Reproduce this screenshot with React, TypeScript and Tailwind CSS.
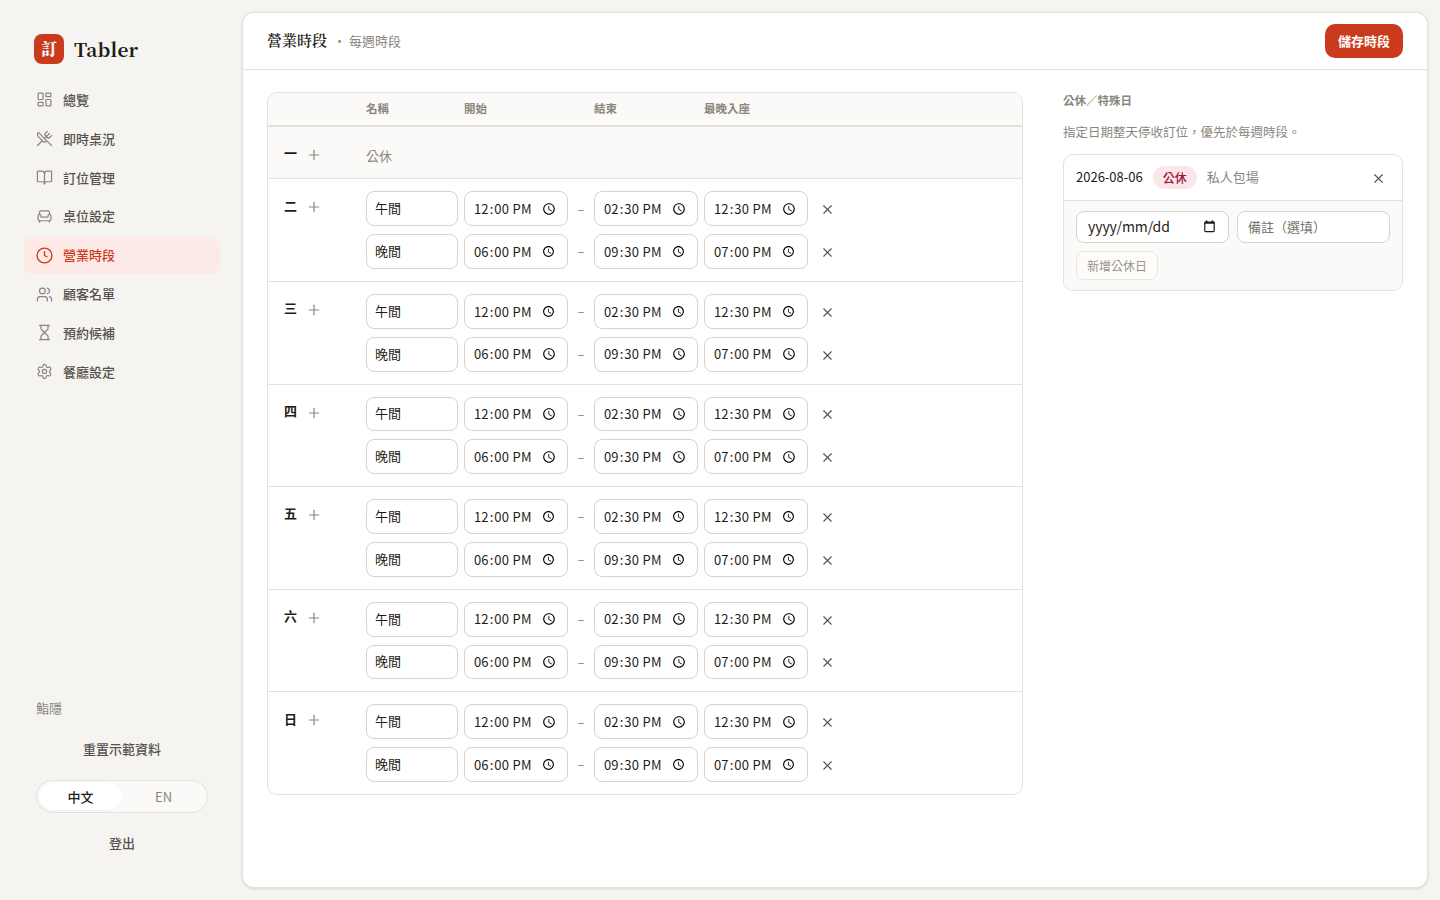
import React from 'react';
import {
  Armchair,
  BookOpen,
  Hourglass,
  LayoutDashboard,
  Plus,
  Settings,
  Users,
  UtensilsCrossed,
  X,
} from 'lucide-react';

const ShortHandClock = ({ className }: { size?: number; strokeWidth?: number; className?: string }) => (
  <svg
    width="17"
    height="17"
    viewBox="0 0 24 24"
    fill="none"
    stroke="currentColor"
    strokeWidth="1.9"
    strokeLinecap="round"
    strokeLinejoin="round"
    className={className}
  >
    <circle cx="12" cy="12" r="10.5" />
    <path d="M12 6.5V12l3.5 1.8" />
  </svg>
);

const navItems = [
  { label: '總覽', icon: LayoutDashboard },
  { label: '即時桌況', icon: UtensilsCrossed },
  { label: '訂位管理', icon: BookOpen },
  { label: '桌位設定', icon: Armchair },
  { label: '營業時段', icon: ShortHandClock, active: true },
  { label: '顧客名單', icon: Users },
  { label: '預約候補', icon: Hourglass },
  { label: '餐廳設定', icon: Settings },
];

const openDays = ['二', '三', '四', '五', '六', '日'];

const shifts = [
  { name: '午間', start: '12:00', end: '14:30', last: '12:30' },
  { name: '晚間', start: '18:00', end: '21:30', last: '19:00' },
];

const Sidebar = () => (
  <aside className="flex w-[242px] shrink-0 flex-col pt-[34px]">
    <div className="flex h-[30px] items-center gap-[10px] pl-[34px]">
      <div className="flex size-[30px] items-center justify-center rounded-lg bg-[#c93b1c] font-['Noto_Serif_CJK_TC','Noto_Sans_CJK_TC',serif] text-base font-black text-white">
        訂
      </div>
      <span className="font-['Noto_Serif_CJK_TC','Noto_Serif','DejaVu_Serif',serif] text-[19px] font-bold tracking-[0.2px] text-[#1f1c18]">
        Tabler
      </span>
    </div>

    <nav className="mt-[17.4px] flex flex-col gap-[2px] pr-[22px] pl-6">
      {navItems.map(({ label, icon: Icon, active }) => (
        <a
          key={label}
          href="#"
          className={`flex h-[36.85px] items-center gap-[10px] rounded-lg pl-3 text-[13px] leading-5 font-medium ${
            active ? 'bg-[#fdeae7] text-[#c93b1c]' : 'text-[#57534c]'
          }`}
        >
          <Icon size={17} strokeWidth={1.75} className={active ? 'text-[#c93b1c]' : 'text-[#8a867d]'} />
          {label}
        </a>
      ))}
    </nav>

    <div className="mt-auto flex flex-col pr-[34px] pb-[47px] pl-9 text-[13px]">
      <span className="leading-5 text-[#8a867d]">鮨隱</span>
      <button className="mt-[21px] h-5 text-center font-medium text-[#57534c]">重置示範資料</button>
      <div className="mt-[21px] flex h-[33px] rounded-full border border-[#e4e2dc] bg-[#fbfaf8] p-[2px]">
        <button className="flex-1 rounded-full bg-white font-medium text-[#1f1c18] shadow-xs">中文</button>
        <button className="flex-1 text-[#8a867d]">EN</button>
      </div>
      <button className="mt-5 h-5 text-center font-medium text-[#57534c]">登出</button>
    </div>
  </aside>
);

const fieldClass =
  'h-[34.8px] rounded-lg border border-[#d6d3cd] bg-white text-[13px] text-[#1f1c18] outline-none';

const TimeField = ({ value }: { value: string }) => (
  <input type="time" defaultValue={value} className={`${fieldClass} w-[104px] px-2 tracking-[0.1px]`} />
);

const DateField = () => (
  <div className="flex h-8 w-[153px] items-center justify-between rounded-lg border border-[#d6d3cd] bg-white pr-3 pl-[11px] text-[14px] text-[#1f1c18]">
    <span className="-mt-[2px] tracking-[-0.1px]">yyyy/mm/dd</span>
    <svg width="13" height="13" viewBox="0 0 13 13" fill="none" stroke="currentColor" className="-mt-[2px]">
      <rect x="1.8" y="2" width="9.4" height="9.6" rx="0.8" strokeWidth="1.2" />
      <path d="M1.5 2.8h10M3.6 0.6v1.6M9.4 0.6v1.6" strokeWidth="1.8" />
    </svg>
  </div>
);

const DayRow = ({ day }: { day: string }) => (
  <div className="flex border-b border-[#e4e2dc] px-4 py-3 last:border-b-0">
    <div className="flex h-8 w-[82px] items-center gap-[9px] text-[#1f1c18]">
      <span className="-mt-1 text-[13px] font-bold">{day}</span>
      <Plus size={16} strokeWidth={1.75} className="text-[#8a867d]" />
    </div>
    <div className="flex flex-col gap-2">
      {shifts.map((shift) => (
        <div key={shift.name} className="flex items-center">
          <input type="text" defaultValue={shift.name} className={`${fieldClass} mr-[6px] w-[92px] px-2 pb-[2px]`} />
          <TimeField value={shift.start} />
          <span className="w-[26px] pb-px text-center text-[13px] text-[#8a867d]">–</span>
          <TimeField value={shift.end} />
          <span className="w-[6px]" />
          <TimeField value={shift.last} />
          <X size={15} strokeWidth={1.7} className="mt-[2px] ml-3 text-[#57534c]" />
        </div>
      ))}
    </div>
  </div>
);

const WeeklyHours = () => (
  <section className="h-[703px] w-[756px] shrink-0 overflow-hidden rounded-[10px] border border-[#e4e2dc]">
    <div className="flex h-[34px] items-center border-b-2 border-[#e4e2dc] bg-[#fbfaf8] pl-[98px] text-[11.5px] font-bold text-[#8a867d]">
      <span className="w-[98px]">名稱</span>
      <span className="w-[130px]">開始</span>
      <span className="w-[110px]">結束</span>
      <span>最晚入座</span>
    </div>
    <div className="flex h-[52.4px] items-center border-b border-[#e4e2dc] bg-[#fbfaf8] px-4">
      <div className="flex w-[82px] items-center gap-[9px] pt-1 text-[#1f1c18]">
        <span className="-mt-1 text-[13px] font-bold">一</span>
        <Plus size={16} strokeWidth={1.75} className="text-[#8a867d]" />
      </div>
      <span className="pt-[6px] text-[13px] text-[#8a867d]">公休</span>
    </div>
    {openDays.map((day) => (
      <DayRow key={day} day={day} />
    ))}
  </section>
);

const ClosedDates = () => (
  <section className="flex-1">
    <h2 className="text-[11.5px] leading-4 font-bold text-[#8a867d]">公休／特殊日</h2>
    <p className="mt-[14px] text-[12.5px] leading-5 text-[#8a867d]">指定日期整天停收訂位，優先於每週時段。</p>
    <div className="mt-3 overflow-hidden rounded-[10px] border border-[#e4e2dc]">
      <div className="flex h-[46px] items-center border-b border-[#e4e2dc] px-3 text-[13px]">
        <span className="-mt-px text-[#1f1c18]">2026-08-06</span>
        <span className="ml-[10px] flex h-[23px] items-center rounded-full bg-[#fbe6ea] px-[10px] text-[12px] font-medium text-[#a3123a]">
          公休
        </span>
        <span className="-mt-px ml-[10px] text-[#8a867d]">私人包場</span>
        <X size={15} strokeWidth={1.7} className="mt-[2px] mr-1 ml-auto text-[#57534c]" />
      </div>
      <div className="bg-[#fbfaf8] px-3 pt-[10px] pb-[10px]">
        <div className="flex gap-2">
          <DateField />
          <input
            type="text"
            placeholder="備註（選填）"
            className="h-8 w-[153px] rounded-lg border border-[#d6d3cd] bg-white px-[10px] pb-px text-[13px] outline-none placeholder:text-[#77736b]"
          />
        </div>
        <button className="mt-2 block h-[29px] rounded-lg border border-[#e9e7e2] bg-[#fdfcfb] px-[10px] text-[12px] text-[#98948c]">
          新增公休日
        </button>
      </div>
    </div>
  </section>
);

const App = () => {
  return (
    <div
      lang="zh-Hant"
      className="flex h-[900px] w-[1440px] overflow-hidden bg-[#f5f4f0] font-['Noto_Sans_CJK_TC',sans-serif] antialiased"
    >
      <Sidebar />
      <main className="mt-3 mr-3 mb-3 flex flex-1 flex-col rounded-xl border border-[#e4e2dc] bg-white shadow-sm">
        <header className="flex h-[57px] items-center border-b border-[#e4e2dc] px-6">
          <h1 className="-mt-[2px] font-['Noto_Serif_CJK_TC','Noto_Sans_CJK_TC',serif] text-[15px] font-semibold text-[#1f1c18]">
            營業時段
          </h1>
          <span className="ml-[6px] flex text-[13px] text-[#8a867d]">
            <span className="w-4">・</span>每週時段
          </span>
          <button className="ml-auto h-[34px] rounded-[10px] bg-[#c93b1c] px-[13px] text-[13px] font-bold text-white">
            儲存時段
          </button>
        </header>
        <div className="flex gap-10 px-6 pt-[22px]">
          <WeeklyHours />
          <ClosedDates />
        </div>
      </main>
    </div>
  );
};

export default App;
